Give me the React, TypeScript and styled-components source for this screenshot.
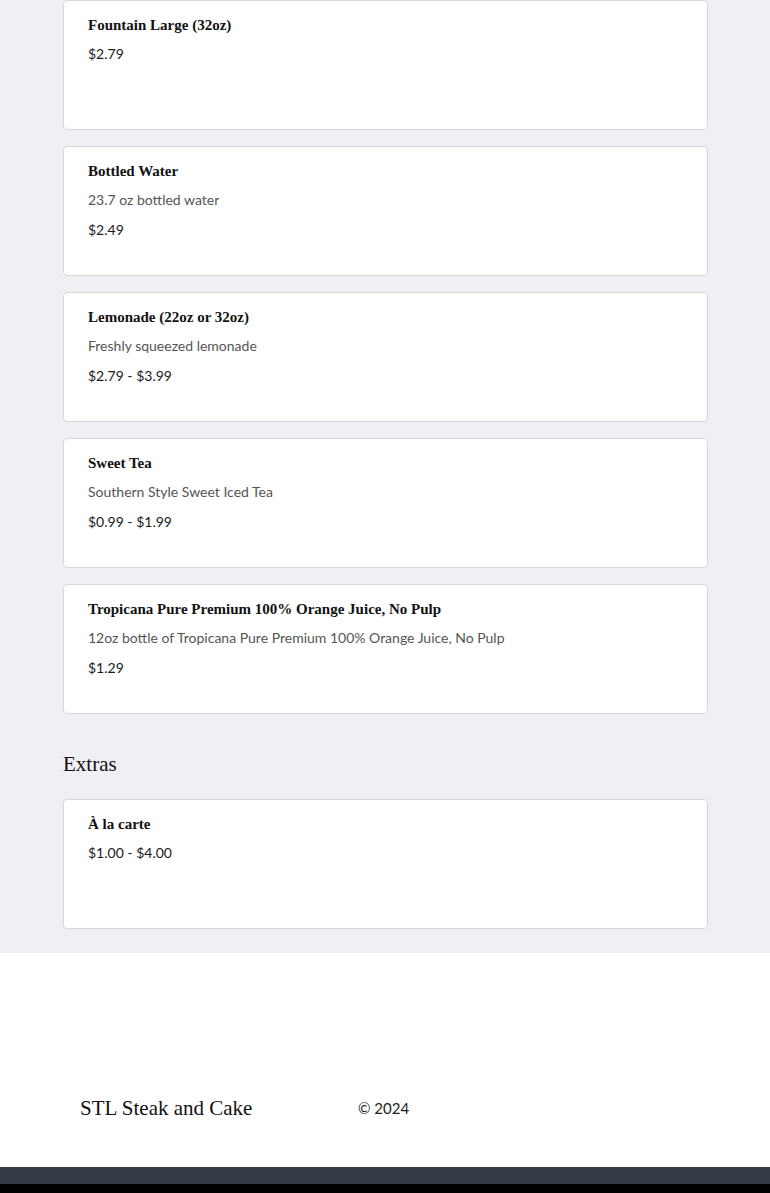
import styled, { createGlobalStyle } from "styled-components";

interface Item {
  name: string;
  description?: string;
  price: string;
}

const drinks: Item[] = [
  { name: "Fountain Large (32oz)", price: "$2.79" },
  { name: "Bottled Water", description: "23.7 oz bottled water", price: "$2.49" },
  {
    name: "Lemonade (22oz or 32oz)",
    description: "Freshly squeezed lemonade",
    price: "$2.79 - $3.99",
  },
  {
    name: "Sweet Tea",
    description: "Southern Style Sweet Iced Tea",
    price: "$0.99 - $1.99",
  },
  {
    name: "Tropicana Pure Premium 100% Orange Juice, No Pulp",
    description: "12oz bottle of Tropicana Pure Premium 100% Orange Juice, No Pulp",
    price: "$1.29",
  },
];

const extras: Item[] = [{ name: "À la carte", price: "$1.00 - $4.00" }];

function MenuCard({ item }: { item: Item }) {
  return (
    <Card>
      <ItemName>{item.name}</ItemName>
      {item.description && <ItemDesc>{item.description}</ItemDesc>}
      <ItemPrice>{item.price}</ItemPrice>
    </Card>
  );
}

function App() {
  return (
    <>
      <GlobalStyle />
      <Main>
        <Section>
          <CardList>
            {drinks.map((d) => (
              <MenuCard key={d.name} item={d} />
            ))}
          </CardList>
        </Section>
        <Section>
          <SectionTitle>Extras</SectionTitle>
          <CardList>
            {extras.map((d) => (
              <MenuCard key={d.name} item={d} />
            ))}
          </CardList>
        </Section>
      </Main>
      <Footer>
        <FooterInner>
          <Brand>STL Steak and Cake</Brand>
          <Copy>© 2024</Copy>
        </FooterInner>
      </Footer>
      <BottomBar />
      <BlackStrip />
    </>
  );
}

export default App;

const GlobalStyle = createGlobalStyle`
  * { box-sizing: border-box; }
  body {
    margin: 0;
    background: #fff;
    font-family: "Lato", "Liberation Sans", sans-serif;
    color: #111;
  }
`;

const Main = styled.main`
  background: #f0f0f4;
  padding: 0 62px 24px 63px;
`;

const Section = styled.section`
  max-width: 645px;
  margin: 0 auto;
`;

const SectionTitle = styled.h2`
  font-family: "Liberation Serif", serif;
  font-weight: 400;
  font-size: 21px;
  line-height: 26px;
  margin: 37px 0 22px;
  color: #111;
`;

const CardList = styled.div`
  display: flex;
  flex-direction: column;
  gap: 16px;
`;

const Card = styled.div`
  background: #fff;
  border: 1px solid #d6d6da;
  border-radius: 4px;
  height: 130px;
  padding: 15px 24px;
  display: flex;
  flex-direction: column;
`;

const ItemName = styled.h3`
  font-family: "Liberation Serif", serif;
  font-weight: 700;
  font-size: 15px;
  line-height: 18px;
  margin: 0 0 11px;
  color: #111;
`;

const ItemDesc = styled.p`
  font-size: 14px;
  line-height: 18px;
  margin: 0 0 12px;
  color: #555;
`;

const ItemPrice = styled.p`
  font-size: 14px;
  line-height: 18px;
  margin: 0;
  color: #1a1a1a;
`;

const Footer = styled.footer`
  background: #fff;
  height: 214px;
  padding: 142px 80px 0;
`;

const FooterInner = styled.div`
  display: flex;
  align-items: center;
`;

const Brand = styled.div`
  font-family: "Liberation Serif", serif;
  font-size: 21px;
  line-height: 26px;
  width: 278px;
  color: #111;
`;

const Copy = styled.div`
  font-size: 15px;
  color: #222;
`;

const BottomBar = styled.div`
  height: 17px;
  background: #343a44;
`;

const BlackStrip = styled.div`
  height: 9px;
  background: #000;
`;
